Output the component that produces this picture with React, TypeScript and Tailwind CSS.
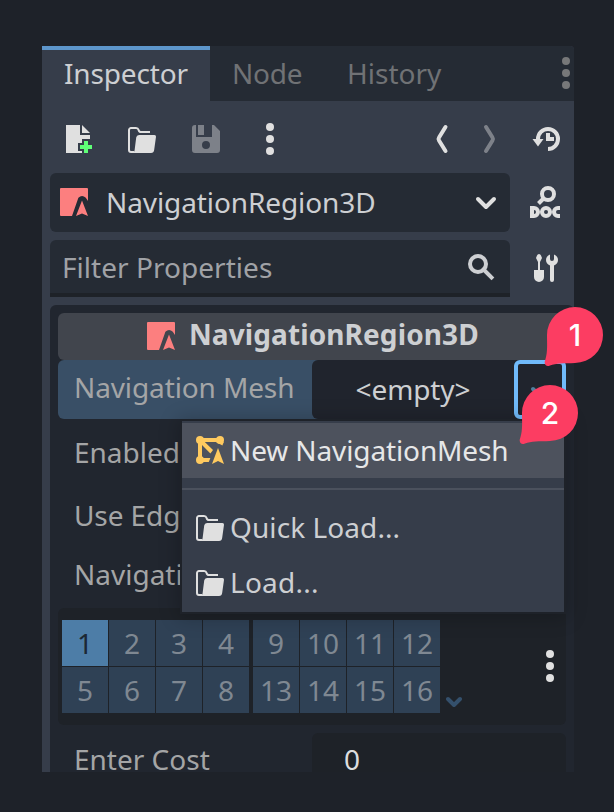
import React from "react";

type IconProps = { className?: string };

function FolderIcon({ className = "" }: IconProps) {
  return (
    <svg viewBox="0 0 16 16" className={`size-8 shrink-0 ${className}`} fill="#e0e0e0">
      <path d="M4 14.5H2.500a1 1 0 0 1-1-1v-10a1 1 0 0 1 1-1H5q1 0 1.300 1 .2 1 1.200 1H12" fill="none" stroke="#e0e0e0" />
      <path d="M6.500 6h7.700q.9 0 .8.9l-.9 6.500q-.2 1.600-1.600 1.600H2.600q1.500 0 1.700-1.400l.8-6.300Q5.300 6 6.500 6z" />
    </svg>
  );
}

function RegionIcon({ className = "" }: IconProps) {
  return (
    <svg viewBox="0 0 16 16" className={`size-8 shrink-0 ${className}`} fill="#fc7f7f">
      <path d="M1.500 1h13q.5 0 .5.5V7.500L13.900 5.900Q12 4 10.200 5.900L7 15H1.500q-.5 0-.5-.5v-13q0-.5.5-.5z" />
      <path d="M12 7.200L15 15l-3-1.200L9 15z" />
    </svg>
  );
}

function MeshIcon({ className = "" }: IconProps) {
  return (
    <svg viewBox="0 0 16 16" className={`size-8 shrink-0 ${className}`} fill="#ffca5f">
      <circle cx="3" cy="3" r="2" />
      <circle cx="13" cy="3" r="2" />
      <circle cx="3" cy="13" r="2" />
      <path d="M3 2h10v2H5.400l4.100 4-1.300 1.700L4 5.500V12h4.200l-.8 2H3V13H2V3z" />
      <path d="M11 4h3.900L14.200 5.800z" />
      <path d="M12 7l3 8-3-1.500L9 15z" />
    </svg>
  );
}

function DotsIcon({ color, className = "" }: IconProps & { color: string }) {
  return (
    <svg viewBox="0 0 8 32" className={`h-8 w-2 shrink-0 ${className}`} fill={color}>
      <circle cx="4" cy="4" r="4" />
      <circle cx="4" cy="16" r="4" />
      <circle cx="4" cy="28" r="4" />
    </svg>
  );
}

function Toolbar() {
  return (
    <div className="flex h-[72px] items-center pt-1 pl-[22px]">
      <svg viewBox="0 0 16 16" className="size-8" fill="#e0e0e0">
        <path d="M1 1h7v5h5v2H9v2H7v4h2v1H1zM9 1v4h4z" />
        <path d="M10 9h2v2h2v2h-2v2h-2v-2H8v-2h2z" fill="#5fff77" />
      </svg>
      <FolderIcon className="ml-[30px]" />
      <svg viewBox="0 0 16 16" className="ml-8 size-8" fill="#7d8189">
        <path fillRule="evenodd" d="M2.500 1H3v6h8V1h1l3 3v9.500a1.500 1.500 0 0 1-1.500 1.500h-11A1.500 1.500 0 0 1 1 13.500v-11A1.500 1.500 0 0 1 2.500 1zM8 9a2 2 0 1 0 0 4 2 2 0 0 0 0-4z" />
        <path d="M4 1h3v5H4z" />
      </svg>
      <DotsIcon color="#e0e0e0" className="ml-11" />
      <svg viewBox="0 0 16 32" className="ml-40 h-8 w-4" fill="none" stroke="#e0e0e0" strokeWidth="4" strokeLinecap="round" strokeLinejoin="round">
        <path d="M11.500 4L5 14.500Q4 16 5 17.500L11.500 28" />
      </svg>
      <svg viewBox="0 0 16 32" className="ml-8 h-8 w-4" fill="none" stroke="#7d8189" strokeWidth="4" strokeLinecap="round" strokeLinejoin="round">
        <path d="M4 4l6.500 10.500q1 1.500 0 3L4 28" />
      </svg>
      <svg viewBox="0 0 32 32" className="ml-8 size-8" fill="none" stroke="#e0e0e0">
        <path d="M8 16A10 10 0 1 1 18 26" strokeWidth="4" />
        <path d="M2.500 16h11L8 23.500z" fill="#e0e0e0" stroke="none" />
        <path d="M16 10h4v4h4v4h-8z" fill="#e0e0e0" stroke="none" />
      </svg>
    </div>
  );
}

function SelectorRows() {
  return (
    <div className="flex flex-col gap-2 pl-2">
      <div className="flex h-[59px] items-start">
        <div className="flex h-[59px] w-[460px] items-start rounded-md bg-[#252b34] pt-[10px] pl-2 text-[#cdcfd2]">
          <RegionIcon className="mt-[3px]" />
          <span className="ml-4 w-[364px] tracking-[-0.1px]">NavigationRegion3D</span>
          <svg viewBox="0 0 24 24" className="mt-2 ml-1 size-6" fill="none" stroke="#e0e0e0" strokeWidth="4" strokeLinecap="round" strokeLinejoin="round">
            <path d="M4 8l8 8 8-8" />
          </svg>
        </div>
        <svg viewBox="0 0 32 34" className="mt-3 ml-5 h-[34px] w-8" fill="none" stroke="#e0e0e0">
          <circle cx="18" cy="9" r="6" strokeWidth="4" />
          <path d="M14 13l-5.500 5.500" strokeWidth="4" />
          <path d="M2 23h2a4 4 0 0 1 0 8H2z" strokeWidth="4" />
          <circle cx="16" cy="27" r="4" strokeWidth="4" />
          <path d="M30 23h-2a4 4 0 0 0 0 8h2" strokeWidth="4" />
        </svg>
      </div>
      <div className="flex h-[57px] items-start">
        <div className="flex h-[57px] w-[460px] items-start rounded-t-md border-b-4 border-[#1e2228] bg-[#252b34] pt-2 pl-3 text-[#a0a2a6]">
          <span className="w-[404px] tracking-[0.04px]">Filter Properties</span>
          <svg viewBox="0 0 32 32" className="mt-1 size-8" fill="none" stroke="#cdcfd2" strokeWidth="4">
            <circle cx="12" cy="12" r="8" />
            <path d="M17.500 17.500l8 8" strokeLinecap="square" />
          </svg>
        </div>
        <svg viewBox="0 0 32 32" className="mt-3 ml-5 size-8" fill="#e0e0e0">
          <path d="M9 2q1.500 0 2 1.500l1 2.500-2 4v8h4v7a5 5 0 0 1-10 0v-7h4v-8L6 6l1-2.500Q7.500 2 9 2z" />
          <path d="M20 2.500V7q0 2 2 2t2-2V2.500q4 1.500 4 5.500 0 3.500-4 5.500V28q0 2-2 2t-2-2V13.500q-4-2-4-5.500 0-4 4-5.500z" />
        </svg>
      </div>
    </div>
  );
}

function LayerCell({ value, active = false }: { value: number; active?: boolean }) {
  return (
    <div className={`h-[46px] w-[46px] pt-1 text-center ${active ? "bg-[#4d7da7] text-[#1c2834]" : "bg-[#2f4155] text-[#7f8892]"}`}>
      {value}
    </div>
  );
}

function LayerGroup({ values }: { values: number[] }) {
  return (
    <div className="grid h-[93px] grid-cols-[repeat(4,46px)] gap-px">
      {values.map((v) => (
        <LayerCell key={v} value={v} active={v === 1} />
      ))}
    </div>
  );
}

function Properties() {
  return (
    <div className="mt-2 ml-2 h-[467px] rounded-t-md bg-[#21262f] pt-2 pl-2 text-[#a4a5a6]">
      <div className="flex h-[47px] w-[508px] items-start rounded-md bg-[#41454d] pt-[2px] pl-[87px] font-bold text-[#cdcfd2]">
        <RegionIcon className="mt-[5px]" />
        <span className="ml-3 tracking-[0.1px]">NavigationRegion3D</span>
      </div>
      <div className="flex h-[59px] w-[508px] rounded-md bg-[#394f66]">
        <div className="w-[254px] pt-2 pl-4 tracking-[-0.12px]">Navigation Mesh</div>
        <div className="flex w-[254px] rounded-md bg-[#20242d] text-[#cdcfd2]">
          <span className="w-[202px] pt-[10px] text-center tracking-[-0.1px]">&lt;empty&gt;</span>
          <div className="flex w-[52px] items-center justify-center rounded-md border-4 border-[#70bafa]">
            <svg viewBox="0 0 24 24" className="size-6" fill="none" stroke="#4f7f9e" strokeWidth="4" strokeLinecap="round">
              <path d="M5 11l7 7 7-7" />
            </svg>
          </div>
        </div>
      </div>
      <div className="mt-[14px] w-[123px] pl-4">Enabled</div>
      <div className="mt-[25px] w-[123px] pl-4 tracking-[-0.1px]">Use Edg</div>
      <div className="mt-[21px] w-[123px] pl-4">Navigati</div>
      <div className="mt-[15px] flex h-[117px] w-[508px] rounded-md bg-[#1e2228] pt-3 pl-1">
        <LayerGroup values={[1, 2, 3, 4, 5, 6, 7, 8]} />
        <div className="w-[4px]" />
        <LayerGroup values={[9, 10, 11, 12, 13, 14, 15, 16]} />
        <svg viewBox="0 0 16 12" className="mt-[76px] ml-[6px] h-3 w-4" fill="none" stroke="#34506c" strokeWidth="4" strokeLinecap="round" strokeLinejoin="round">
          <path d="M2 3l6 6 6-6" />
        </svg>
        <DotsIcon color="#e0e0e0" className="mt-[30px] ml-[84px]" />
      </div>
      <div className="mt-2 flex h-[39px] w-[508px] leading-6">
        <div className="w-[254px] pt-[14px] pl-4">Enter Cost</div>
        <div className="w-[254px] rounded-t-md bg-[#1e2228] pt-[14px] pl-8 text-[#dcdddf]">0</div>
      </div>
    </div>
  );
}

function Menu() {
  return (
    <div className="absolute top-[421px] left-[182px] h-[191px] w-[382px] bg-[#363d4a] pt-[2px] text-[#cdcfd2] shadow-[0_0_0_2px_#1e2229,0_2px_18px_4px_rgba(0,0,0,0.22)]">
      <div className="flex h-[55px] bg-[#4d525d] pt-2 pl-3 text-[#e6e7e8]">
        <MeshIcon className="mt-[3px]" />
        <span className="ml-1 tracking-[-0.12px]">New NavigationMesh</span>
      </div>
      <div className="mt-[10px] h-[2px] bg-[#4b515d]" />
      <div className="mt-[18px] flex pl-3">
        <FolderIcon className="mt-[3px]" />
        <span className="ml-1 tracking-[0.08px]">Quick Load...</span>
      </div>
      <div className="mt-[17px] flex pl-3">
        <FolderIcon className="mt-[3px]" />
        <span className="ml-1 tracking-[0.25px]">Load...</span>
      </div>
    </div>
  );
}

function Marker({ label, className }: { label: string; className: string }) {
  return (
    <div className={`absolute h-[61px] w-[60px] ${className}`}>
      <svg viewBox="0 0 60 61" className="absolute inset-0 size-full" fill="#fc3d62">
        <path d="M31 1A28 28 0 1 1 31 57C20 57.500 12 57 6 59.500Q2.300 61 1 58.300 0 56.500 1.500 53C3.800 46 3 37 3 29A28 28 0 0 1 31 1z" />
      </svg>
      <span className="absolute top-[10px] left-[3px] w-14 text-center font-['Inter',sans-serif] text-[30px] font-medium text-white">
        {label}
      </span>
    </div>
  );
}

export default function App() {
  return (
    <div className="relative h-[812px] w-[614px] overflow-hidden bg-[#1e2229] pt-[46px] pl-[42px] font-['Noto_Sans',sans-serif] text-[28px] leading-[38px] whitespace-nowrap">
      <div className="h-[726px] w-[532px] overflow-hidden rounded-tr-[4px] bg-[#363d4a]">
        <div className="flex h-[55px] bg-[#252b34] text-[#707275]">
          <div className="w-[168px] border-t-4 border-[#5d96cb] bg-[#363d4a] pt-1 pl-[22px] tracking-[-0.15px] text-[#cdcfd2]">Inspector</div>
          <div className="w-[115px] pt-2 pl-[22px] tracking-[-0.2px]">Node</div>
          <div className="w-[195px] pt-2 pl-[22px]">History</div>
          <DotsIcon color="#777879" className="mt-[11px] ml-[42px]" />
        </div>
        <Toolbar />
        <SelectorRows />
        <Properties />
      </div>
      <Menu />
      <Marker label="1" className="top-[306px] left-[544px]" />
      <Marker label="2" className="top-[384px] left-[519px]" />
    </div>
  );
}
